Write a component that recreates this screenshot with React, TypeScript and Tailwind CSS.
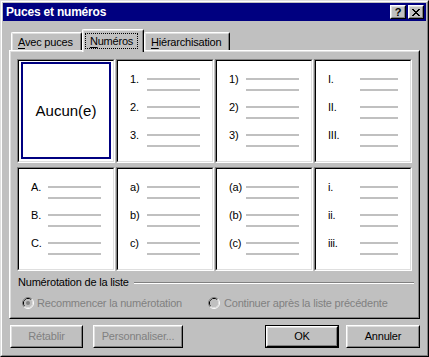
import React from "react";

const XROWS: number[][] = [
  [0, 1, 6, 7],
  [1, 2, 5, 6],
  [2, 3, 4, 5],
  [3, 4],
  [2, 3, 4, 5],
  [1, 2, 5, 6],
  [0, 1, 6, 7],
];

function CapBtn({ children }: { children: React.ReactNode }) {
  return (
    <div className="w-[16px] h-[14px] border border-t-white border-l-white border-r-black border-b-black bg-[#c0c0c0]">
      <div className="w-full h-full border border-t-[#dfdfdf] border-l-[#dfdfdf] border-r-[#808080] border-b-[#808080] flex items-center justify-center">
        {children}
      </div>
    </div>
  );
}

function Radio({ checked }: { checked?: boolean }) {
  return (
    <svg width="12" height="12" viewBox="0 0 12 12" className="shrink-0">
      <path d="M2.11 9.89A5.5 5.5 0 0 1 9.89 2.11" fill="none" stroke="#808080" />
      <path d="M9.89 2.11A5.5 5.5 0 0 1 2.11 9.89" fill="none" stroke="#ffffff" />
      <path d="M2.82 9.18A4.5 4.5 0 0 1 9.18 2.82" fill="none" stroke="#000000" />
      <path d="M9.18 2.82A4.5 4.5 0 0 1 2.82 9.18" fill="none" stroke="#dfdfdf" />
      <circle cx="6" cy="6" r="4" fill="#c0c0c0" />
      {checked && <circle cx="6" cy="6" r="2" fill="#808080" />}
    </svg>
  );
}

function Btn({
  children,
  w,
  disabled,
}: {
  children: React.ReactNode;
  w: string;
  disabled?: boolean;
}) {
  return (
    <div className={`${w} h-[23px] border border-t-white border-l-white border-r-black border-b-black`}>
      <div
        className={`h-full border border-t-[#dfdfdf] border-l-[#dfdfdf] border-r-[#808080] border-b-[#808080] flex items-center justify-center ${
          disabled ? "text-[#808080]" : "text-black"
        }`}
      >
        {children}
      </div>
    </div>
  );
}

function Cell({
  items,
  lineW,
  selected,
}: {
  items?: string[];
  lineW?: string;
  selected?: boolean;
}) {
  return (
    <div className="border border-t-[#808080] border-l-[#808080] border-r-white border-b-white">
      <div className="h-full border border-t-black border-l-black border-r-[#dfdfdf] border-b-[#dfdfdf] bg-white flex flex-col">
        {selected ? (
          <div className="flex-1 m-[2px] mt-[1px] border-2 border-[#000080] flex items-center justify-center text-[15px] tracking-normal">
            Aucun(e)
          </div>
        ) : (
          <div className="pt-[12px]">
            {(items || []).map((t) => (
              <div key={t} className="h-[28px]">
                <div className="h-[12px] flex items-center pl-[12px]">
                  <span>{t}</span>
                  <div className={`ml-auto mr-[12px] h-[2px] bg-[#c0c0c0] ${lineW}`} />
                </div>
                <div className={`mt-[4px] ml-auto mr-[12px] h-[2px] bg-[#c0c0c0] ${lineW}`} />
              </div>
            ))}
          </div>
        )}
      </div>
    </div>
  );
}

export default function App() {
  return (
    <div className="w-[429px] h-[357px] bg-[#c0c0c0] [font-family:'Liberation_Sans',Arial,sans-serif] text-[11px] tracking-[-0.2px] text-black leading-none">
      <div className="w-full h-full border border-t-[#dfdfdf] border-l-[#dfdfdf] border-r-black border-b-black">
        <div className="w-full h-full border border-t-white border-l-white border-r-[#808080] border-b-[#808080] p-px flex flex-col">
          {/* Title bar */}
          <div className="h-[18px] shrink-0 bg-[#000080] flex items-center pl-[3px] pr-[2px]">
            <span className="text-white font-bold text-[12px]">Puces et numéros</span>
            <div className="ml-auto flex gap-[2px]">
              <CapBtn>
                <span className="font-bold text-[11px] leading-none mt-px">?</span>
              </CapBtn>
              <CapBtn>
                <svg width="8" height="7" viewBox="0 0 8 7" shapeRendering="crispEdges">
                  {XROWS.map((cols, r) =>
                    cols.map((c) => <rect key={`${r}-${c}`} x={c} y={r} width="1" height="1" fill="#000" />)
                  )}
                </svg>
              </CapBtn>
            </div>
          </div>

          {/* Body */}
          <div className="px-[6px] pt-[8px] flex flex-col">
            {/* Tabs */}
            <div className="flex items-end h-[21px] pl-[2px]">
              <div className="w-[71px] h-[18px] border-t border-l border-r border-t-white border-l-white border-r-black rounded-tl-[2px] rounded-tr-[2px]">
                <div className="h-full border-t border-l border-r border-t-[#dfdfdf] border-l-[#dfdfdf] border-r-[#808080] flex items-center pl-[5px]">
                  <span>
                    <span className="underline underline-offset-[2px]">A</span>vec puces
                  </span>
                </div>
              </div>
              <div className="relative z-10 w-[62px] h-[23px] mb-[-2px] bg-[#c0c0c0] border-t border-l border-r border-t-white border-l-white border-r-black rounded-tl-[2px] rounded-tr-[2px]">
                <div className="h-full border-t border-l border-r border-t-[#dfdfdf] border-l-[#dfdfdf] border-r-[#808080] pt-[2px] pl-px">
                  <div className="w-[53px] h-[16px] border border-dotted border-black flex items-center justify-center">
                    <span>
                      <span className="underline underline-offset-[2px]">N</span>uméros
                    </span>
                  </div>
                </div>
              </div>
              <div className="w-[86px] h-[18px] border-t border-l border-r border-t-white border-l-white border-r-black rounded-tl-[2px] rounded-tr-[2px]">
                <div className="h-full border-t border-l border-r border-t-[#dfdfdf] border-l-[#dfdfdf] border-r-[#808080] flex items-center pl-[5px]">
                  <span>
                    <span className="underline underline-offset-[2px]">H</span>iérarchisation
                  </span>
                </div>
              </div>
            </div>

            {/* Panel */}
            <div className="h-[269px] border border-t-white border-l-white border-r-black border-b-black">
              <div className="h-full border border-t-[#dfdfdf] border-l-[#dfdfdf] border-r-[#808080] border-b-[#808080] pt-[7px] pl-[6px] flex flex-col">
                <div className="grid grid-cols-[repeat(4,98px)] grid-rows-[repeat(2,104px)] gap-x-px gap-y-[4px]">
                  <Cell selected />
                  <Cell items={["1.", "2.", "3."]} lineW="w-[53px]" />
                  <Cell items={["1)", "2)", "3)"]} lineW="w-[53px]" />
                  <Cell items={["I.", "II.", "III."]} lineW="w-[38px]" />
                  <Cell items={["A.", "B.", "C."]} lineW="w-[53px]" />
                  <Cell items={["a)", "b)", "c)"]} lineW="w-[53px]" />
                  <Cell items={["(a)", "(b)", "(c)"]} lineW="w-[53px]" />
                  <Cell items={["i.", "ii.", "iii."]} lineW="w-[38px]" />
                </div>

                {/* Group label */}
                <div className="mt-[5px] h-[13px] flex items-center pl-px">
                  <span>Numérotation de la liste</span>
                  <div className="flex-1 ml-[5px] mr-[4px] h-[2px] border-t border-b border-t-[#808080] border-b-white" />
                </div>

                {/* Radios */}
                <div className="mt-[7px] h-[14px] flex items-center pl-[5px] text-[#808080]">
                  <div className="w-[186px] flex items-center">
                    <Radio checked />
                    <span className="ml-[3px]">Recommencer la numérotation</span>
                  </div>
                  <div className="flex items-center">
                    <Radio />
                    <span className="ml-[4px]">Continuer après la liste précédente</span>
                  </div>
                </div>
              </div>
            </div>

            {/* Buttons */}
            <div className="mt-[6px] flex justify-between pl-px">
              <div className="flex gap-[10px]">
                <Btn w="w-[73px]" disabled>
                  Rétablir
                </Btn>
                <Btn w="w-[90px]" disabled>
                  Personnaliser...
                </Btn>
              </div>
              <div className="flex gap-[7px]">
                <div className="w-[74px] h-[23px] border border-black">
                  <div className="h-full border border-t-white border-l-white border-r-black border-b-black">
                    <div className="h-full border border-t-[#dfdfdf] border-l-[#dfdfdf] border-r-[#808080] border-b-[#808080] flex items-center justify-center">
                      OK
                    </div>
                  </div>
                </div>
                <Btn w="w-[74px]">Annuler</Btn>
              </div>
            </div>
          </div>
        </div>
      </div>
    </div>
  );
}
